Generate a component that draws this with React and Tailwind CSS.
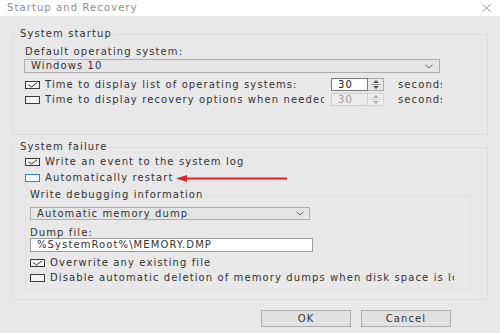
import React from 'react';

const font = { fontFamily: '"DejaVu Sans", "Liberation Sans", sans-serif' };

function Check({ checked, blue }) {
  return (
    <span
      className={
        'relative w-[15px] h-[8px] shrink-0 border ' +
        (blue ? 'border-[#3d7fc6] bg-[#f4f8fc]' : 'border-[#3a3a3a] bg-[#f4f4f4]')
      }
    >
      {checked && (
        <svg className="absolute inset-0" width="13" height="6" viewBox="0 0 13 6">
          <polyline points="2.5,2.8 5.5,5 11,0.8" fill="none" stroke="#333" strokeWidth="1" />
        </svg>
      )}
    </span>
  );
}

function CheckRow({ checked, blue, children, className = '', labelW }) {
  return (
    <div className={'flex items-center h-[12px] ' + className}>
      <Check checked={checked} blue={blue} />
      <span
        className="ml-[5px] whitespace-nowrap overflow-hidden leading-[12px]"
        style={labelW ? { width: labelW } : undefined}
      >
        {children}
      </span>
    </div>
  );
}

function Chevron() {
  return (
    <svg width="8" height="5" viewBox="0 0 8 5" className="shrink-0">
      <polyline points="0.5,0.8 4,4 7.5,0.8" fill="none" stroke="#666" strokeWidth="1" />
    </svg>
  );
}

function Spinner({ disabled }) {
  return (
    <div className="flex h-[13px]">
      <div
        className={
          'w-[37px] h-full border flex items-center pl-[6px] leading-none ' +
          (disabled ? 'border-[#cfcfcf] bg-[#ececec] text-[#a0a0a0]' : 'border-[#7a7a7a] bg-white text-[#222]')
        }
      >
        30
      </div>
      <div
        className={
          'w-[16px] h-full border border-l-0 flex flex-col items-center justify-center gap-[1px] ' +
          (disabled ? 'border-[#d6d6d6] bg-[#ececec]' : 'border-[#a9a9a9] bg-[#e6e6e6]')
        }
      >
        <svg width="6" height="3" viewBox="0 0 6 3">
          <polygon points="0,3 3,0 6,3" fill={disabled ? '#b0b0b0' : '#555'} />
        </svg>
        <div className={'w-[10px] h-px ' + (disabled ? 'bg-[#d0d0d0]' : 'bg-[#9a9a9a]')} />
        <svg width="6" height="3" viewBox="0 0 6 3">
          <polygon points="0,0 6,0 3,3" fill={disabled ? '#b0b0b0' : '#555'} />
        </svg>
      </div>
    </div>
  );
}

export default function App() {
  return (
    <div
      className="relative w-[500px] h-[333px] bg-[#e8e8e8] text-[#333] text-[10px] tracking-[1.1px] overflow-hidden"
      style={font}
    >
      {/* Title bar */}
      <div className="h-[16px] bg-white flex items-center justify-between pl-[7px] pr-[9px]">
        <span className="text-[#8c8c8c] leading-none">Startup and Recovery</span>
        <svg width="9" height="8" viewBox="0 0 9 8">
          <path d="M0.5 0.5 L8.5 7.5 M8.5 0.5 L0.5 7.5" stroke="#9a9a9a" strokeWidth="1" />
        </svg>
      </div>

      {/* System startup */}
      <fieldset className="mx-[12px] mt-[12px] h-[107px] border border-[#dcdcdc] pl-[6px] pr-0 pb-0">
        <legend className="px-[1px] leading-[12px]">System startup</legend>
        <div className="pl-[6px]">
          <div className="mt-[6px] leading-[12px]">Default operating system:</div>
          <div className="mt-[1px] ml-[-1px] w-[416px] h-[14px] border border-[#adadad] bg-[#e5e5e5] flex items-center justify-between pl-[6px] pr-[6px]">
            <span className="leading-none">Windows 10</span>
            <Chevron />
          </div>
          <div className="mt-[5px] flex items-center h-[13px]">
            <CheckRow checked labelW={282}>
              Time to display list of operating systems:
            </CheckRow>
            <div className="ml-[4px]">
              <Spinner />
            </div>
            <span className="ml-[14px] w-[44px] overflow-hidden whitespace-nowrap leading-none">seconds</span>
          </div>
          <div className="mt-[2px] flex items-center h-[13px]">
            <CheckRow labelW={279}>Time to display recovery options when needed</CheckRow>
            <div className="ml-[7px]">
              <Spinner disabled />
            </div>
            <span className="ml-[14px] w-[44px] overflow-hidden whitespace-nowrap leading-none">seconds</span>
          </div>
        </div>
      </fieldset>

      {/* System failure */}
      <fieldset className="mx-[12px] mt-[6px] h-[159px] border border-[#dcdcdc] pl-[6px] pr-0 pb-0">
        <legend className="px-[1px] leading-[12px]">System failure</legend>
        <div className="pl-[6px]">
          <CheckRow checked className="mt-[3px]">
            Write an event to the system log
          </CheckRow>
          <CheckRow blue className="mt-[4px]">
            Automatically restart
          </CheckRow>

          <fieldset className="mt-[5px] w-[446px] h-[101px] border border-[#e0e0e0] pl-[3px] pr-0 pb-0">
            <legend className="px-[1px] leading-[12px]">Write debugging information</legend>
            <div className="pl-[1px]">
              <div className="mt-[6px] w-[280px] h-[13px] border border-[#adadad] bg-[#e5e5e5] flex items-center justify-between pl-[6px] pr-[5px]">
                <span className="leading-none">Automatic memory dump</span>
                <Chevron />
              </div>
              <div className="mt-[8px] leading-[10px]">Dump file:</div>
              <div className="w-[283px] h-[14px] border border-[#9c9c9c] bg-white flex items-center pl-[6px]">
                <span className="leading-none">%SystemRoot%\MEMORY.DMP</span>
              </div>
              <CheckRow checked className="mt-[5px]">
                Overwrite any existing file
              </CheckRow>
              <CheckRow className="mt-[3px]" labelW={404}>
                Disable automatic deletion of memory dumps when disk space is low
              </CheckRow>
            </div>
          </fieldset>
        </div>
      </fieldset>

      {/* Buttons */}
      <div className="mt-[10px] flex justify-end gap-[10px] pr-[49px]">
        <button className="w-[90px] h-[17px] border border-[#adadad] bg-[#e1e1e1] leading-none tracking-[1.1px]">
          OK
        </button>
        <button className="w-[90px] h-[17px] border border-[#adadad] bg-[#e1e1e1] leading-none tracking-[1.1px]">
          Cancel
        </button>
      </div>

      {/* Red annotation arrow */}
      <svg className="absolute left-[175px] top-[174px]" width="114" height="9" viewBox="0 0 114 9">
        <line x1="8" y1="4.5" x2="112" y2="4.5" stroke="#e3212b" strokeWidth="2" />
        <polygon points="1,4.5 12,1 12,8" fill="#e3212b" />
      </svg>
    </div>
  );
}
